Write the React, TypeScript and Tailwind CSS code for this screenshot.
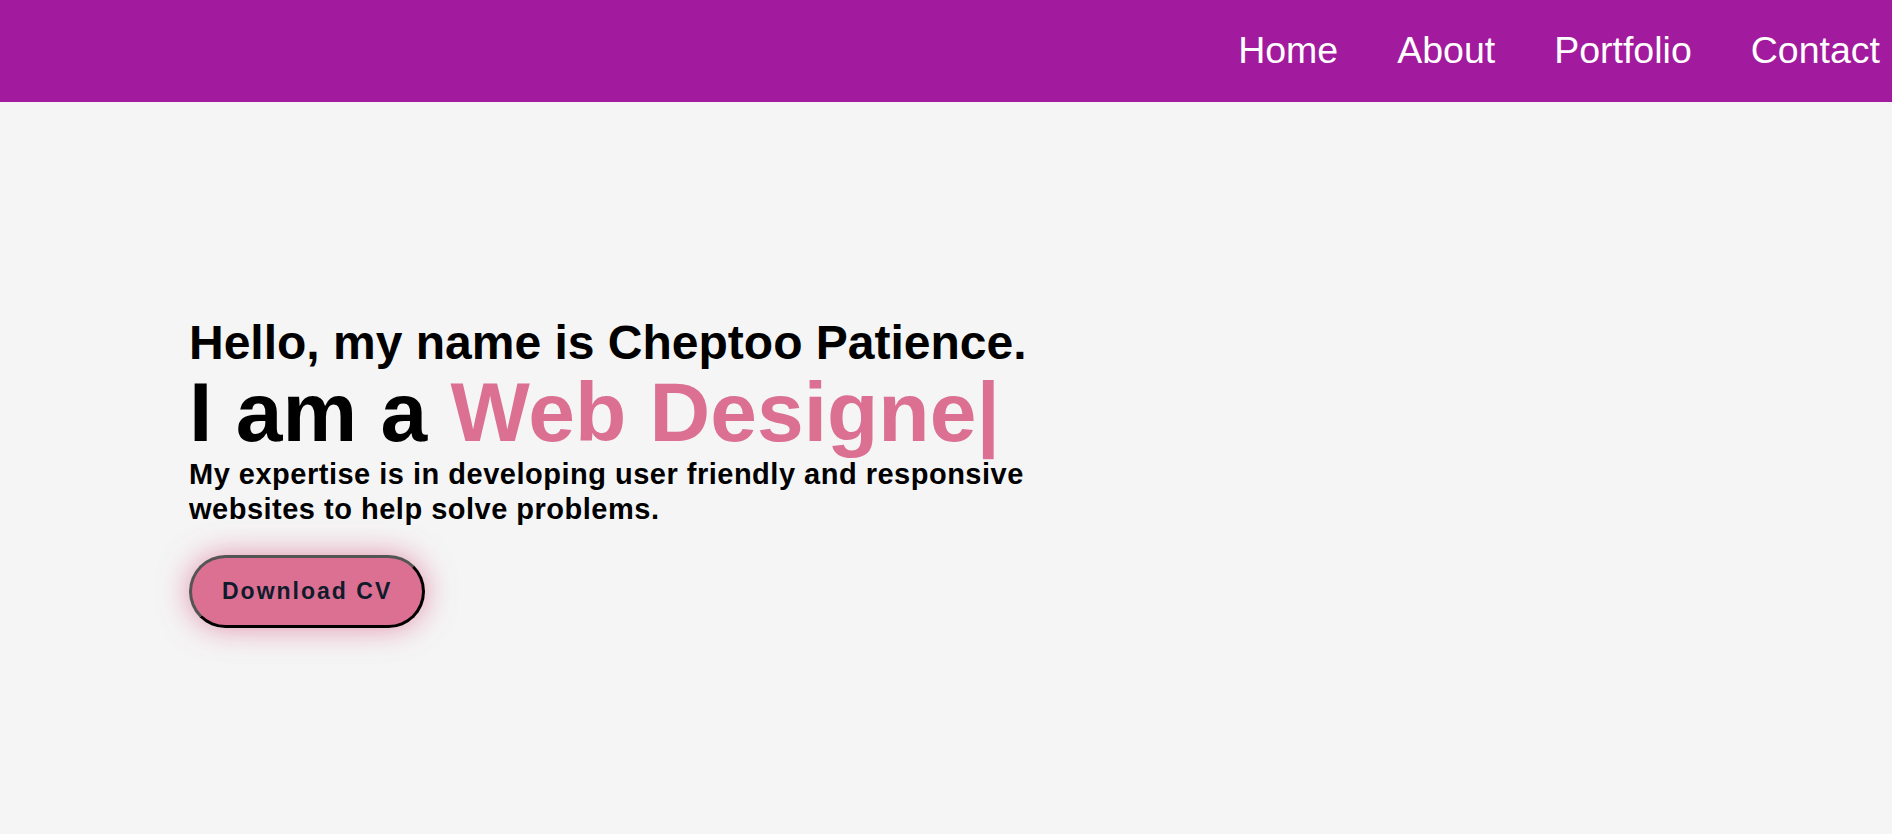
const links = ["Home", "About", "Portfolio", "Contact"];

const Navbar = () => {
  return (
    <nav className="h-[102px] w-full bg-[#a21a9e] flex items-center justify-end gap-[59px] pr-[12px]">
      {links.map((link) => (
        <a key={link} href="#" className="text-white text-[37.5px] leading-[1.15]">
          {link}
        </a>
      ))}
    </nav>
  );
};

const Hero = () => {
  return (
    <main className="h-[732px] pl-[189px] pt-[213px]">
      <div className="w-[900px]">
        <h2 className="text-[48px] font-bold leading-[1.15] text-black">
          Hello, my name is Cheptoo Patience.
        </h2>
        <h1 className="text-[84px] font-bold leading-none text-black">
          I am a <span className="text-[#db7093]">Web Designe|</span>
        </h1>
        <p className="mt-[3px] text-[29px] font-bold leading-[35px] tracking-[0.5px] text-black">
          My expertise is in developing user friendly and responsive websites to help solve problems.
        </p>
        <button className="mt-[28px] rounded-full border-[3px] border-t-[#545454] border-l-[#545454] border-r-black border-b-black bg-[#db7093] px-[30px] py-[20px] text-[23px] font-bold leading-[1.15] tracking-[2px] text-[#0f1b2b] shadow-[0_0_30px_rgba(219,112,147,0.75)]">
          Download CV
        </button>
      </div>
    </main>
  );
};

export default function App() {
  return (
    <div className="min-h-screen bg-[#f5f5f5] font-['Liberation_Sans',Arial,sans-serif]">
      <Navbar />
      <Hero />
    </div>
  );
}
